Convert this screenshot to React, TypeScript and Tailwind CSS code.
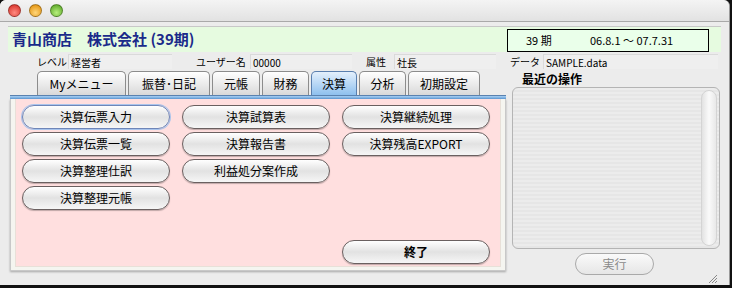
import React from "react";

const jp = { fontFamily: '"Noto Sans CJK JP", "Noto Sans", sans-serif' };

const tabs = [
  { label: "Myメニュー", w: "w-[89px]" },
  { label: "振替･日記", w: "w-[82px]" },
  { label: "元帳", w: "w-[48px]" },
  { label: "財務", w: "w-[47px]" },
  { label: "決算", w: "w-[46px]", active: true },
  { label: "分析", w: "w-[47px]" },
  { label: "初期設定", w: "w-[72px]" },
];

const buttons: (string | null)[][] = [
  ["決算伝票入力", "決算試算表", "決算継続処理"],
  ["決算伝票一覧", "決算報告書", "決算残高EXPORT"],
  ["決算整理仕訳", "利益処分案作成", null],
  ["決算整理元帳", null, null],
];

function AquaButton({ label, focus }: { label: string; focus?: boolean }) {
  return (
    <button
      className={`h-[24px] w-[148px] rounded-full border text-[12px] leading-none text-black bg-gradient-to-b from-[#ffffff] via-[#e2e2e2] to-[#f6f6f6] ${
        focus
          ? "border-[#6f86b8] shadow-[0_0_0_1px_#a9c4ec]"
          : "border-[#6a6060] shadow-[0_1px_1px_rgba(0,0,0,0.25)]"
      }`}
    >
      {label}
    </button>
  );
}

function Light({ color }: { color: string }) {
  return (
    <div
      className={`h-[13px] w-[13px] rounded-full border border-black/30 ${color}`}
    />
  );
}

export default function App() {
  return (
    <div className="w-[732px] h-[288px] bg-[#111] overflow-hidden" style={jp}>
      <div className="w-[730px] h-[285px] bg-[#ececec] rounded-t-[6px] flex flex-col border-r border-[#9a9a9a]">
        {/* title bar */}
        <div className="h-[22px] rounded-t-[6px] bg-gradient-to-b from-[#f4f4f4] to-[#e2e2e2] border-b border-[#a9a9a9] flex items-center gap-[8px] pl-[8px]">
          <Light color="bg-[radial-gradient(circle_at_50%_70%,#ff8a80,#d3271f)]" />
          <Light color="bg-[radial-gradient(circle_at_50%_70%,#ffd67a,#e08a00)]" />
          <Light color="bg-[radial-gradient(circle_at_50%_70%,#b7ef7d,#4f9e1c)]" />
        </div>

        {/* header */}
        <div className="mt-[4px] mx-[8px] h-[26px] bg-[#e6fbe0] border-t border-[#c8c8c8] flex items-center justify-between pl-[4px] pr-[12px]">
          <div className="text-[15px] font-bold text-[#1a2a8a]">
            青山商店　株式会社 (39期)
          </div>
          <div className="mt-[2px] w-[202px] h-[23px] bg-[#eaffea] border-[1.5px] border-black flex items-center text-[11px] text-black">
            <span className="pl-[18px] w-[82px]">39 期</span>
            <span>06.8.1 ～ 07.7.31</span>
          </div>
        </div>

        {/* info row */}
        <div className="mt-[2px] h-[15px] flex items-center text-[10px] text-black">
          <span className="ml-[37px] w-[31px]">レベル</span>
          <span className="w-[104px] h-[15px] bg-[#efefef] border-t border-l border-[#dadada] pl-[2px]">経営者</span>
          <span className="ml-[24px] w-[54px]">ユーザー名</span>
          <span className="w-[102px] h-[15px] bg-[#efefef] border-t border-l border-[#dadada] pl-[2px]">00000</span>
          <span className="ml-[14px] w-[28px]">属性</span>
          <span className="w-[102px] h-[15px] bg-[#efefef] border-t border-l border-[#dadada] pl-[2px]">社長</span>
          <span className="ml-[14px] w-[33px]">データ</span>
          <span className="w-[175px] h-[15px] bg-[#efefef] border-t border-l border-[#dadada] pl-[2px]">SAMPLE.data</span>
        </div>

        {/* main */}
        <div className="mt-[2px] flex pl-[10px]">
          {/* left column */}
          <div className="w-[496px] flex flex-col">
            <div className="h-[24px] flex items-end gap-[2px] pl-[27px]">
              {tabs.map((t) => (
                <div
                  key={t.label}
                  className={`${t.w} h-[24px] rounded-t-[5px] border border-b-0 flex items-center justify-center text-[12px] text-black ${
                    t.active
                      ? "border-[#5a7fae] bg-gradient-to-b from-[#e4f0fc] to-[#8ec0ee]"
                      : "border-[#8c8c8c] bg-gradient-to-b from-[#ffffff] to-[#d9d9d9]"
                  }`}
                >
                  {t.label}
                </div>
              ))}
            </div>
            <div className="h-[4px] bg-gradient-to-b from-[#a9d0f2] to-[#5f9ad6] border-t border-[#5a82b0]" />
            <div className="h-[172px] bg-[#f5f5f0] border-x border-b border-[#c8c8c8] shadow-[0_1px_2px_rgba(0,0,0,0.3)] px-[4px] pb-[3px]">
              <div className="h-full bg-[#ffdfdf] border-x border-b border-[#e8e0d8] pl-[6px] pt-[6px] flex flex-col">
                <div className="flex flex-col gap-[3px]">
                  {buttons.map((row, ri) => (
                    <div key={ri} className="flex gap-[12px]">
                      {row.map((b, ci) =>
                        b ? (
                          <AquaButton key={ci} label={b} focus={ri === 0 && ci === 0} />
                        ) : (
                          <div key={ci} className="w-[148px] h-[24px]" />
                        )
                      )}
                    </div>
                  ))}
                </div>
                <div className="mt-[30px] flex pl-[320px]">
                  <button className="h-[24px] w-[148px] rounded-full border border-[#6a6060] shadow-[0_1px_1px_rgba(0,0,0,0.25)] text-[12px] font-bold text-black bg-gradient-to-b from-[#ffffff] via-[#e2e2e2] to-[#f6f6f6]">
                    終了
                  </button>
                </div>
              </div>
            </div>
          </div>

          {/* right column */}
          <div className="ml-[6px] w-[208px] flex flex-col">
            <div className="h-[16px] pl-[10px] text-[12px] font-bold text-black leading-[16px]">
              最近の操作
            </div>
            <div className="h-[162px] rounded-[6px] border border-[#b4b4b4] bg-[repeating-linear-gradient(180deg,#ececec_0px,#ececec_2px,#e6e6e6_2px,#e6e6e6_4px)] flex justify-end p-[2px]">
              <div className="w-[16px] h-full rounded-full bg-gradient-to-r from-[#e2e2e2] via-[#fafafa] to-[#e8e8e8] border border-[#d4d4d4]" />
            </div>
            <div className="mt-[4px] flex pl-[63px]">
              <button className="h-[22px] w-[79px] rounded-full border border-[#a9a9a9] bg-gradient-to-b from-[#fafafa] to-[#e6e6e6] text-[12px] text-[#8a8a8a]">
                実行
              </button>
            </div>
            <div className="flex justify-end pr-[2px] -mt-[2px]">
              <svg width="11" height="11" viewBox="0 0 11 11">
                <path d="M10 2 L2 10 M10 5 L5 10 M10 8 L8 10" stroke="#888" strokeWidth="1" />
              </svg>
            </div>
          </div>
        </div>
      </div>
    </div>
  );
}
